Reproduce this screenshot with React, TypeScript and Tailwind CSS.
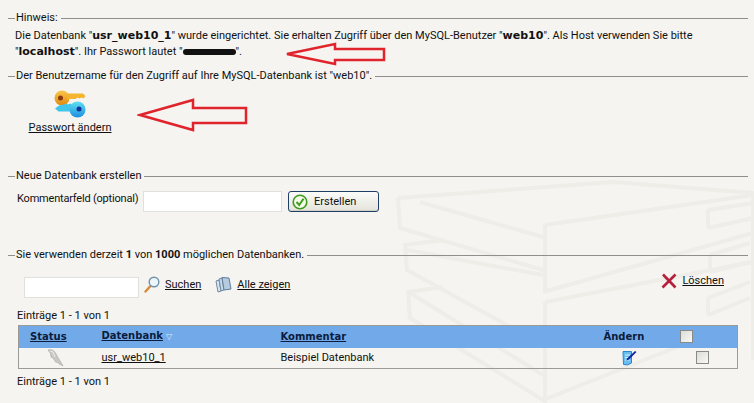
import React from 'react';

function SectionHead({ children }: { children: React.ReactNode }) {
  return (
    <div className="flex items-center h-[14px] pl-[8px] pr-[6px]">
      <div className="w-[7px] h-px bg-[#8f8f8b]" />
      <div className="px-[1px] whitespace-nowrap">{children}</div>
      <div className="flex-1 h-px ml-[2px] bg-[#8f8f8b]" />
    </div>
  );
}

function Check({ className = '' }: { className?: string }) {
  return <div className={`w-[13px] h-[13px] border border-[#8a8a86] bg-gradient-to-br from-[#dcdcd8] to-[#f8f8f6] ${className}`} />;
}

function KeysIcon() {
  return (
    <svg width="32" height="28" viewBox="0 0 32 28">
      <defs>
        <linearGradient id="gold" x1="0" y1="0" x2="0" y2="1">
          <stop offset="0" stopColor="#fbc64a" />
          <stop offset="1" stopColor="#e08a10" />
        </linearGradient>
        <linearGradient id="sky" x1="0" y1="0" x2="0" y2="1">
          <stop offset="0" stopColor="#5fe0f0" />
          <stop offset="1" stopColor="#1f8ee0" />
        </linearGradient>
      </defs>
      <circle cx="8" cy="8" r="7.500" fill="url(#gold)" />
      <path d="M13 3.500H29l2.500 2.500-2 2.500-2-1-2 1-2-1-2 1.500H13z" fill="#f5b42e" />
      <circle cx="6.500" cy="8" r="2.500" fill="#8a3a10" />
      <path d="M20 13l-2 1.500-2-1-2 1-2-1-2 1-5 1L1 18.500l3.500 3H20z" fill="#3fc6ea" />
      <circle cx="23.500" cy="19.500" r="8" fill="url(#sky)" />
      <circle cx="25" cy="19" r="2.500" fill="#10309a" />
    </svg>
  );
}

function CheckCircle() {
  return (
    <svg width="16" height="16" viewBox="0 0 16 16">
      <circle cx="8" cy="8" r="6.800" fill="#f4fbe8" stroke="#3f9a1e" strokeWidth="1.600" />
      <path d="M4.500 8l2.700 3L11.500 4.800" fill="none" stroke="#3f9a1e" strokeWidth="2" />
    </svg>
  );
}

function LensIcon() {
  return (
    <svg width="16" height="17" viewBox="0 0 16 17">
      <path d="M6 10.500L1.500 15.500" stroke="#d88a35" strokeWidth="2.400" strokeLinecap="round" />
      <circle cx="10" cy="6" r="4.800" fill="#eef6fb" stroke="#6f93ad" strokeWidth="1.400" />
    </svg>
  );
}

function PagesIcon() {
  return (
    <svg width="17" height="17" viewBox="0 0 17 17">
      <path d="M1 5l3-1 2 11-3 1z" fill="#d8e4ee" stroke="#6f8aa3" />
      <path d="M4 3l3-1 2 12-3 1z" fill="#c8d8e6" stroke="#6f8aa3" />
      <path d="M7 1.500l7 .5 2 11-7 1z" fill="#b4cbe0" stroke="#5f7d9a" />
    </svg>
  );
}

function DolphinIcon() {
  return (
    <svg width="17" height="18" viewBox="0 0 17 18">
      <path d="M1 1c3-1 6 0 7.500 3L11 8.500l4 6.500 1 2-3-1.500-2.500-2-2-.5L6 9 4 8 3.500 4.500z" fill="#c8c8c4" stroke="#a8a8a4" strokeWidth=".6" />
      <path d="M3 2l3 1 2 5" fill="none" stroke="#ecece8" />
    </svg>
  );
}

function EditIcon() {
  return (
    <svg width="15" height="17" viewBox="0 0 15 17">
      <path d="M1 2.500h8.500V14q-4 3-8 1.500z" fill="#67bdf0" stroke="#2a86cf" />
      <path d="M3 6h5M3 8.500h5M3 11h5" stroke="#d5efff" />
      <path d="M5 9.500L13 2l1.500 1L7 10.500l-2.500 1z" fill="#14249c" />
    </svg>
  );
}

function Watermark() {
  return (
    <svg className="absolute left-0 top-0 pointer-events-none" width="754" height="403" viewBox="0 0 754 403" fill="none" stroke="#eeede8" strokeWidth="4">
      <path d="M398 198L613 182 753 193V360" />
      <path d="M398 198L400 228 543 270" />
      <path d="M420 202L543 237" />
      <path d="M545 225L753 195" />
      <path d="M545 225V292" />
      <path d="M708 210L753 203M708 228L753 218M708 210V228" />
      <path d="M443 240L405 245 407 270 543 345" />
      <path d="M407 250L543 275" />
      <path d="M543 292L753 233" />
      <path d="M710 255L750 243M710 272L750 262M710 255V272" />
      <path d="M443 287L408 292 410 318 543 400 720 330" />
      <path d="M410 293L543 375" />
      <path d="M545 302L753 262" />
      <path d="M545 302V403" />
      <path d="M708 298L750 282M708 315L750 298M708 298V315" />
    </svg>
  );
}

export default function App() {
  return (
    <div className="relative w-[754px] h-[403px] overflow-hidden bg-[#f5f4f0] text-[11px] leading-[14px] text-[#111] font-['Roboto','Liberation_Sans',sans-serif] pt-[11px]">
      <Watermark />

      <div className="relative">
        <SectionHead>Hinweis:</SectionHead>

        <div className="pl-[15px] pt-[3px] leading-[16px] h-[44px]">
          <div className="whitespace-nowrap">
            Die Datenbank "<b className="font-['DejaVu_Sans'] text-[11px]">usr_web10_1</b>" wurde eingerichtet. Sie erhalten Zugriff über den MySQL-Benutzer "<b className="font-['DejaVu_Sans'] text-[11px]">web10</b>". Als Host verwenden Sie bitte
          </div>
          <div className="whitespace-nowrap flex items-center">
            <span>"<b className="font-['DejaVu_Sans'] text-[11px]">localhost</b>". Ihr Passwort lautet "</span>
            <span className="inline-block w-[53px] h-[6px] rounded-full bg-[#111]" />
            <span>".</span>
          </div>
        </div>

        <SectionHead>Der Benutzername für den Zugriff auf Ihre MySQL-Datenbank ist "web10".</SectionHead>

        <div className="flex flex-col items-center w-[82px] ml-[29px] mt-[7px]">
          <KeysIcon />
          <a className="underline mt-[3px] whitespace-nowrap">Passwort ändern</a>
        </div>

        <div className="mt-[34px]">
          <SectionHead>Neue Datenbank erstellen</SectionHead>
        </div>

        <div className="flex items-start h-[21px] mt-[8px] pl-[17px]">
          <span className="pt-[1px] w-[126px] whitespace-nowrap tracking-[-0.2px]">Kommentarfeld (optional)</span>
          <div className="w-[139px] h-[21px] bg-white border border-[#e0e0dc]" />
          <button className="flex items-center w-[91px] h-[21px] ml-[6px] pl-[3px] border border-[#1f3f66] rounded-[3px] bg-gradient-to-b from-[#fbfbf8] to-[#e4e4dc] shadow-[inset_0_-1px_0_#cfcfc8]">
            <CheckCircle />
            <span className="ml-[6px] pt-[1px]">Erstellen</span>
          </button>
        </div>

        <div className="mt-[36px]">
          <SectionHead>
            Sie verwenden derzeit <b>1</b> von <b>1000</b> möglichen Datenbanken.
          </SectionHead>
        </div>

        <div className="flex items-center h-[21px] mt-[15px] pl-[24px] pr-[30px]">
          <div className="w-[115px] h-[21px] bg-white border border-[#e0e0dc]" />
          <div className="flex items-center -mt-[6px]">
            <div className="ml-[5px]"><LensIcon /></div>
            <a className="underline ml-[5px]">Suchen</a>
            <div className="ml-[14px]"><PagesIcon /></div>
            <a className="underline ml-[5px]">Alle zeigen</a>
          </div>
          <div className="flex-1" />
          <div className="flex items-center -mt-[14px]">
            <svg width="16" height="16" viewBox="0 0 16 16">
              <path d="M2 1.500L14.500 14.500M14.500 1.500L1.500 14.500" stroke="#b5203c" strokeWidth="2.600" />
            </svg>
            <a className="underline ml-[5px]">Löschen</a>
          </div>
        </div>

        <div className="pl-[17px] mt-[11px]">Einträge 1 - 1 von 1</div>

        <table className="ml-[18px] mt-[2px] w-[720px] table-fixed border-collapse border border-[#9a9a96]">
          <thead>
            <tr className="h-[22px] bg-[#72a9e8] text-[#0b1c3c] font-['DejaVu_Sans'] text-[10px]">
              <th className="w-[83px] pl-[11px] text-left"><a className="underline">Status</a></th>
              <th className="w-[179px] text-left">
                <a className="underline">Datenbank</a>
                <span className="ml-[3px] text-[8px] text-[#dfeaf8]">▽</span>
              </th>
              <th className="w-[323px] text-left"><a className="underline">Kommentar</a></th>
              <th className="w-[76px] text-left">Ändern</th>
              <th className="text-left"><Check /></th>
            </tr>
          </thead>
          <tbody>
            <tr className="h-[21px]">
              <td className="pl-[28px]"><DolphinIcon /></td>
              <td><a className="underline">usr_web10_1</a></td>
              <td>Beispiel Datenbank</td>
              <td className="pl-[18px]"><EditIcon /></td>
              <td className="pl-[16px]"><Check /></td>
            </tr>
          </tbody>
        </table>

        <div className="pl-[17px] mt-[6px]">Einträge 1 - 1 von 1</div>
      </div>

      <svg className="absolute left-[283px] top-[42px] pointer-events-none" width="103" height="24" viewBox="0 0 103 24" fill="none">
        <path d="M4 12L52 2V7H101V18H52V22Z" stroke="#e0242c" strokeWidth="2.500" />
      </svg>
      <svg className="absolute left-[137px] top-[98px] pointer-events-none" width="112" height="34" viewBox="0 0 112 34" fill="none">
        <path d="M3 17L56 2V10H109V25H56V32Z" stroke="#e0242c" strokeWidth="2.500" />
      </svg>
    </div>
  );
}
